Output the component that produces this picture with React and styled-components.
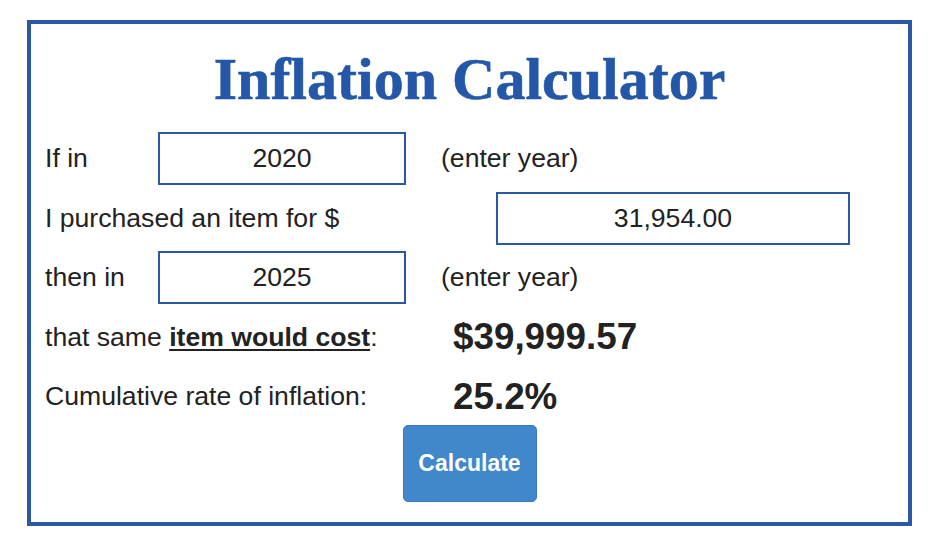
import styled, { createGlobalStyle } from 'styled-components';

const GlobalStyle = createGlobalStyle`
  body {
    margin: 0;
    background: #ffffff;
    font-family: "Liberation Sans", Arial, sans-serif;
    color: #222222;
  }
`;

const Page = styled.div`
  padding: 20px 26px 8px 27px;
`;

const Frame = styled.section`
  box-sizing: border-box;
  width: 885px;
  height: 506px;
  border: 4px solid #2a58a5;
  padding: 20px 0 0 14px;
  display: flex;
  flex-direction: column;
`;

const Title = styled.h1`
  margin: 0 0 18px -14px;
  font-family: "Liberation Serif", "Times New Roman", serif;
  font-weight: bold;
  font-size: 60px;
  line-height: 70px;
  color: #2457a7;
  text-align: center;
  -webkit-text-stroke: 0.6px #2457a7;
`;

const Rows = styled.div`
  display: flex;
  flex-direction: column;
  gap: 6.5px;
`;

const Row = styled.div`
  display: flex;
  align-items: center;
  height: 53px;
  font-size: 26.6px;
`;

const Label = styled.span`
  width: ${p => p.$w}px;
  flex-shrink: 0;
  white-space: nowrap;
`;

const Field = styled.input`
  box-sizing: border-box;
  width: ${p => p.$w}px;
  height: 53px;
  border: 2px solid #2b5a9f;
  background: #ffffff;
  font-family: "Liberation Sans", Arial, sans-serif;
  font-size: 26.6px;
  color: #222222;
  text-align: center;
  padding: 0;
  outline: none;
`;

const Hint = styled.span`
  margin-left: 35px;
`;

const Strong = styled.b`
  text-decoration: underline;
  text-underline-offset: 3px;
`;

const Result = styled.span`
  font-size: 36.8px;
  font-weight: bold;
`;

const Button = styled.button`
  align-self: center;
  margin: 2px 0 0 -14px;
  width: 134px;
  height: 77px;
  border: 1px solid #3978bb;
  border-radius: 5px;
  background: #4088cb;
  color: #ffffff;
  font-family: "Liberation Sans", Arial, sans-serif;
  font-weight: bold;
  font-size: 23px;
  cursor: pointer;
`;

const App = () => (
  <>
    <GlobalStyle />
    <Page>
      <Frame>
        <Title>Inflation Calculator</Title>
        <Rows>
          <Row>
            <Label $w={113}>If in</Label>
            <Field $w={248} defaultValue="2020" />
            <Hint>(enter year)</Hint>
          </Row>
          <Row>
            <Label $w={451}>I purchased an item for $</Label>
            <Field $w={354} defaultValue="31,954.00" />
          </Row>
          <Row>
            <Label $w={113}>then in</Label>
            <Field $w={248} defaultValue="2025" />
            <Hint>(enter year)</Hint>
          </Row>
          <Row>
            <Label $w={408}>that same <Strong>item would cost</Strong>:</Label>
            <Result>$39,999.57</Result>
          </Row>
          <Row>
            <Label $w={408}>Cumulative rate of inflation:</Label>
            <Result>25.2%</Result>
          </Row>
        </Rows>
        <Button>Calculate</Button>
      </Frame>
    </Page>
  </>
);

export default App;
